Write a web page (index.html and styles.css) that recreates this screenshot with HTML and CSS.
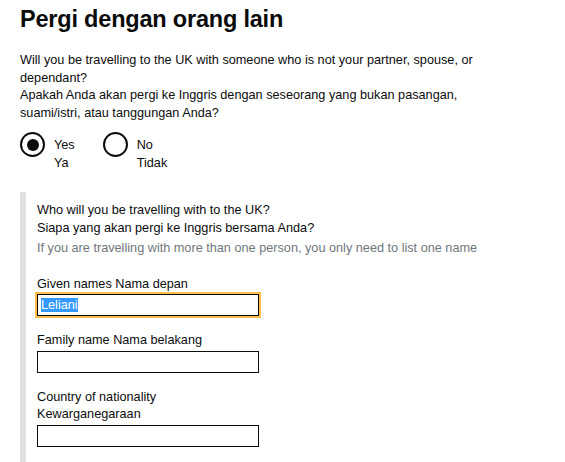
FILE: index.html
```html
<!DOCTYPE html>
<html>
<head>
<meta charset="utf-8">
<link rel="stylesheet" href="styles.css">
</head>
<body>
<main class="page">
  <h1 class="title">Pergi dengan orang lain</h1>
  <div class="question">
    <p class="question-text">Will you be travelling to the UK with someone who is not your partner, spouse, or dependant?<br>Apakah Anda akan pergi ke Inggris dengan seseorang yang bukan pasangan, suami/istri, atau tanggungan Anda?</p>
    <div class="radios">
      <label class="radio">
        <span class="radio-circle checked"></span>
        <span class="radio-label">Yes<br>Ya</span>
      </label>
      <label class="radio">
        <span class="radio-circle"></span>
        <span class="radio-label">No<br>Tidak</span>
      </label>
    </div>
  </div>
  <div class="panel">
    <p class="panel-q">Who will you be travelling with to the UK?<br>Siapa yang akan pergi ke Inggris bersama Anda?</p>
    <p class="hint">If you are travelling with more than one person, you only need to list one name</p>
    <div class="field first">
      <div class="label">Given names Nama depan</div>
      <div class="input focused"><span class="selected">Leliani</span></div>
    </div>
    <div class="field">
      <div class="label">Family name Nama belakang</div>
      <div class="input"></div>
    </div>
    <div class="field">
      <div class="label">Country of nationality<br>Kewarganegaraan</div>
      <div class="input"></div>
    </div>
  </div>
</main>
</body>
</html>
```
FILE: styles.css
```css
* { box-sizing: border-box; }
html, body { margin: 0; padding: 0; background: #fff; }
body {
  font-family: "Liberation Sans", Arial, sans-serif;
  color: #0b0c0c;
  font-size: 12.7px;
  line-height: 17.5px;
}
.page { padding: 0 0 0 20px; }
.title {
  margin: 0;
  padding-top: 4px;
  font-size: 23.5px;
  line-height: 30px;
  font-weight: bold;
  letter-spacing: -0.2px;
}
.question { margin: 0; padding: 0; }
.question-text {
  margin: 18px 0 0;
  width: 470px;
}
.radios {
  display: flex;
  gap: 28px;
  margin-top: 10px;
}
.radio { display: flex; align-items: flex-start; gap: 9px; }
.radio-circle {
  width: 25px; height: 25px;
  border: 2px solid #0b0c0c;
  border-radius: 50%;
  display: flex; align-items: center; justify-content: center;
}
.radio-circle.checked::after {
  content: "";
  width: 12px; height: 12px;
  border-radius: 50%;
  background: #0b0c0c;
}
.radio-label { padding-top: 4px; line-height: 18px; }
.panel {
  margin-top: 20px;
  border-left: 6px solid #dee0e2;
  padding: 10px 0 15px 11px;
}
.panel-q { margin: 0; }
.hint { margin: 3px 0 0; color: #6f777b; }
.field { margin-top: 16px; }
.field.first { margin-top: 18px; }
.label { margin-bottom: 1px; }
.input {
  width: 222px;
  height: 22px;
  border: 1px solid #0b0c0c;
  padding: 2px 3px;
  line-height: 16px;
}
.input.focused {
  outline: 2px solid #ffbf47;
  outline-offset: 0;
}
.selected { background: #3399ff; color: #fff; }
```
